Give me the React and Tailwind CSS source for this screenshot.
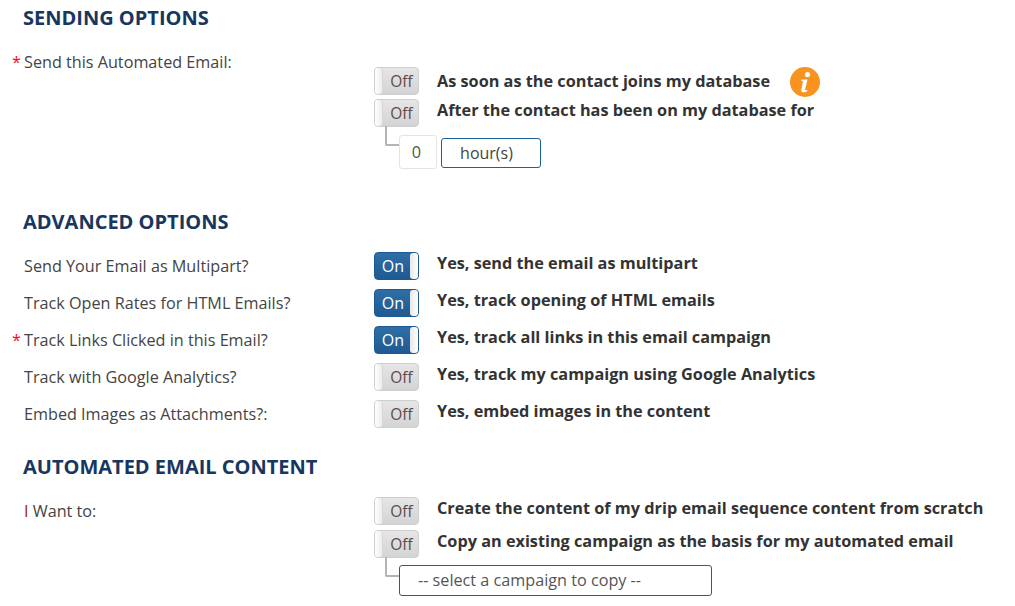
const Toggle = ({ on }) =>
  on ? (
    <div className="flex h-[28px] w-[45px] shrink-0 overflow-hidden rounded-[4px] border border-[#1d5a92] bg-gradient-to-b from-[#2f6ea6] to-[#1f5a92]">
      <span className="flex-1 pl-[1px] text-center text-[16px] leading-[26px] text-white">On</span>
      <span className="w-[8px] rounded-l-[3px] bg-gradient-to-r from-[#e8e8e8] to-white" />
    </div>
  ) : (
    <div className="flex h-[28px] w-[45px] shrink-0 overflow-hidden rounded-[4px] border border-[#cfcfcf] bg-gradient-to-b from-[#e6e6e6] to-[#d4d4d4]">
      <span className="w-[8px] rounded-r-[3px] border-r border-[#d8d8d8] bg-gradient-to-r from-white to-[#ececec]" />
      <span className="flex-1 pl-[2px] text-center text-[15.5px] leading-[27px] text-[#5f4a4a]">Off</span>
    </div>
  );

const Heading = ({ children, className }) => (
  <h2 className={`pl-[23px] text-[20px] font-bold leading-[24px] text-[#17375e] ${className}`}>{children}</h2>
);

const Label = ({ required, children }) => (
  <div className="relative w-[374px] shrink-0 pl-[24px] text-[#444444]">
    {required && <span className="absolute left-[12px] top-0 text-[#ee1111]">*</span>}
    {children}
  </div>
);

const Option = ({ on, children, className = '' }) => (
  <div className={`flex items-start ${className}`}>
    <Toggle on={on} />
    <span className="ml-[18px] whitespace-nowrap text-[16.25px] font-bold leading-[22px] text-[#333333]">{children}</span>
  </div>
);

const Row = ({ label, required, on, children, className = 'mt-[9px]' }) => (
  <div className={`flex items-start leading-[28px] ${className}`}>
    <Label required={required}>{label}</Label>
    <Option on={on}>{children}</Option>
  </div>
);

const Elbow = () => (
  <span className="ml-[11px] mt-[-1px] h-[20px] w-[14px] shrink-0 rounded-bl-[2px] border-b-2 border-l-2 border-[#b5b5b5]" />
);

export default function App() {
  return (
    <div className="h-[606px] w-[1015px] overflow-hidden bg-white font-['Open_Sans',sans-serif] text-[16.2px]">
      <Heading className="pt-[6px]">SENDING OPTIONS</Heading>

      <div className="mt-[18px] flex items-start leading-[28px]">
        <Label required>Send this Automated Email:</Label>
        <div className="mt-[19px]">
          <Option>
            <span className="inline-flex items-center leading-[28px]">
              <span className="mb-[2px]">As soon as the contact joins my database</span>
              <svg viewBox="0 0 30 30" className="ml-[20px] h-[30px] w-[30px]">
                <circle cx="15" cy="15" r="15" fill="#f7931e" />
                <circle cx="17.5" cy="7.5" r="2.6" fill="#fff" />
                <path d="M11.5 12.5h6l-2.4 10c-.2.9.6 1.1 2.2.2v1.6c-2.4 1.4-6.4 1.6-6-1.4l1.7-8.8h-1.8z" fill="#fff" />
              </svg>
            </span>
          </Option>
          <Option className="mt-[2px]">After the contact has been on my database for</Option>
          <div className="flex items-start">
            <Elbow />
            <div className="mt-[8px] h-[34px] w-[38px] rounded-[3px] border border-[#e4e4e4] pr-[3px] text-center leading-[32px] text-[#3f5a4a]">0</div>
            <div className="ml-[4px] mt-[11px] h-[30px] w-[100px] rounded-[3px] border border-[#1c6099] pr-[9px] text-center text-[16px] leading-[28px] text-[#444444]">hour(s)</div>
          </div>
        </div>
      </div>

      <Heading className="mt-[41px]">ADVANCED OPTIONS</Heading>
      <Row className="mt-[18px]" label="Send Your Email as Multipart?" on>Yes, send the email as multipart</Row>
      <Row label="Track Open Rates for HTML Emails?" on>Yes, track opening of HTML emails</Row>
      <Row label="Track Links Clicked in this Email?" required on>Yes, track all links in this email campaign</Row>
      <Row label="Track with Google Analytics?">Yes, track my campaign using Google Analytics</Row>
      <Row label="Embed Images as Attachments?:">Yes, embed images in the content</Row>

      <Heading className="mt-[27px]">AUTOMATED EMAIL CONTENT</Heading>
      <Row className="mt-[18px]" label={<span><span className="text-[#8a1f1f]">I</span> Want to:</span>}>
        Create the content of my drip email sequence content from scratch
      </Row>
      <div className="flex items-start">
        <div className="w-[374px] shrink-0" />
        <div>
          <Option className="mt-[5px]">Copy an existing campaign as the basis for my automated email</Option>
          <div className="flex items-start">
            <Elbow />
            <div className="mt-[7px] h-[31px] w-[313px] rounded-[3px] border border-[#1c6099] pl-[18px] leading-[29px] text-[#555555]">-- select a campaign to copy --</div>
          </div>
        </div>
      </div>
    </div>
  );
}
